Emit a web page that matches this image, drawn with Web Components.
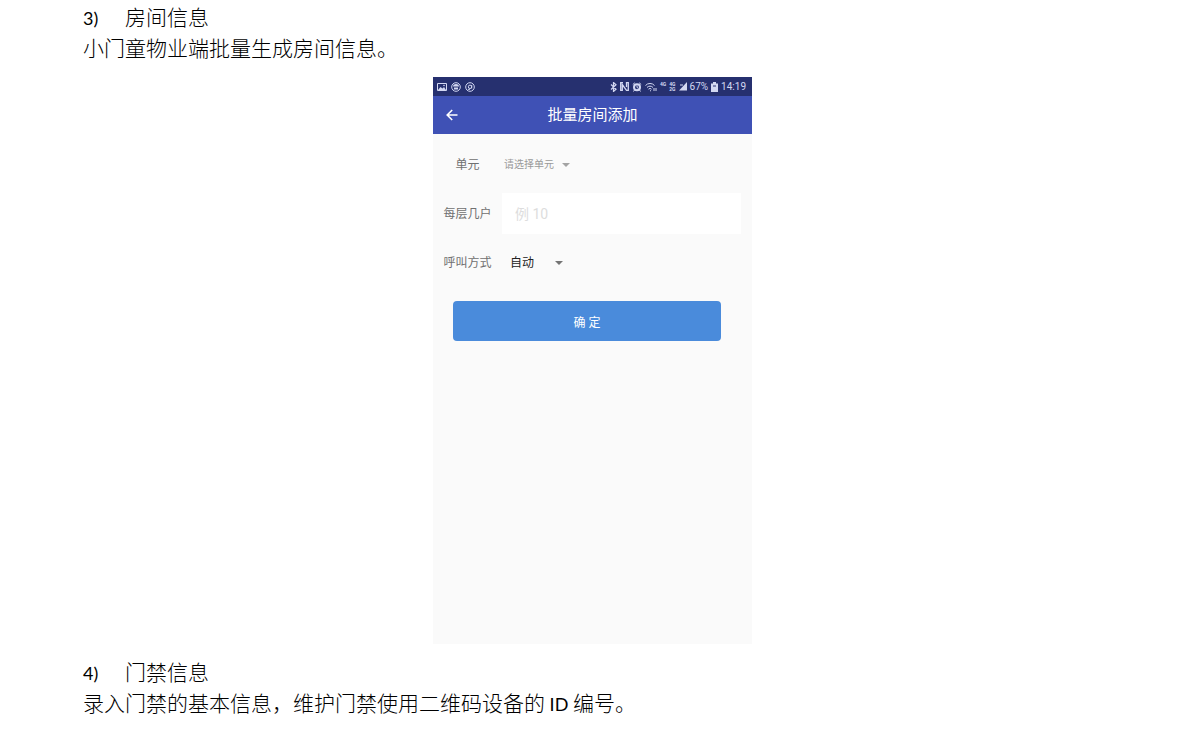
<!DOCTYPE html>
<html lang="zh-CN">
<head>
<meta charset="utf-8">
<title>房间信息</title>
<style>
  body {
    margin: 0;
    background: #ffffff;
    color: #000000;
    font-family: "Lato", "Noto Sans CJK SC", sans-serif;
  }
</style>
</head>
<body>
<manual-page>
  <manual-step number="3)" heading="房间信息">小门童物业端批量生成房间信息。</manual-step>
  <phone-screen heading="批量房间添加">
    <room-form></room-form>
  </phone-screen>
  <manual-step number="4)" heading="门禁信息">录入门禁的基本信息，维护门禁使用二维码设备的<span class="latin"> ID </span>编号。</manual-step>
</manual-page>

<script>
(function registerManual() {
  function define(name, html, setup) {
    const template = document.createElement("template");
    template.innerHTML = html;

    customElements.define(name, class extends HTMLElement {
      constructor() {
        super();
        this.attachShadow({ mode: "open" }).append(template.content.cloneNode(true));
      }

      connectedCallback() {
        if (setup) setup(this, this.shadowRoot);
      }
    });
  }

  define("manual-page", `
    <style>
      :host {
        display: flex;
        flex-direction: column;
        gap: 12px;
        padding: 1px 81px 12px 83px;
      }
    </style>
    <slot></slot>
  `);

  define("manual-step", `
    <style>
      :host {
        display: block;
        font-size: 21px;
        font-weight: 300;
        line-height: 31px;
      }

      h2 {
        display: flex;
        align-items: baseline;
        height: 31px;
        margin: 0;
        font: inherit;
      }

      #number {
        width: 42px;
      }

      #number,
      ::slotted(.latin) {
        font-size: 18px;
        font-weight: 400;
      }

      p {
        margin: 0;
      }
    </style>
    <h2><span id="number"></span><span id="heading"></span></h2>
    <p><slot></slot></p>
  `, (host, root) => {
    root.getElementById("number").textContent = host.getAttribute("number");
    root.getElementById("heading").textContent = host.getAttribute("heading");
  });

  define("status-bar", `
    <style>
      :host {
        display: flex;
        align-items: center;
        justify-content: space-between;
        height: 19px;
        padding: 0 6px 0 4px;
        background: #26306f;
        color: #d3d8f2;
        font: 10px/19px "Roboto", sans-serif;
      }

      div {
        display: flex;
        align-items: center;
        gap: 3px;
      }

      .left {
        gap: 4px;
      }

      .tiny {
        font-size: 5px;
        font-weight: 700;
        line-height: 5px;
      }

      .raised {
        padding-bottom: 5px;
      }

      svg {
        display: block;
        fill: none;
        stroke: currentColor;
      }
    </style>
    <div class="left">
      <svg width="10" height="10" viewBox="0 0 10 10"><path d="M.5 1.500h9v7h-9z"/><path d="M1 8l2.500-3 2 1.500L7 5l2 3z" fill="currentColor" stroke="none"/><circle cx="7" cy="3.500" r=".8" fill="currentColor" stroke="none"/></svg>
      <svg width="10" height="10" viewBox="0 0 10 10"><circle cx="5" cy="5" r="4.300"/><path d="M2 4.500a3 2.500 0 0 1 6 0zM3 5.500h4v2H3z" fill="currentColor" stroke="none"/></svg>
      <svg width="10" height="10" viewBox="0 0 10 10"><circle cx="5" cy="5" r="4.300"/><circle cx="5" cy="4.800" r="1.700"/><path d="M6.700 3v3.500M3 7.300h2"/></svg>
    </div>
    <div>
      <svg width="7" height="10" viewBox="0 0 7 10"><path d="M1 2.500l5 4.700L3.500 9.500v-9L6 2.800 1 7.500" stroke-width="1.200"/></svg>
      <svg width="9" height="9" viewBox="0 0 9 9"><path d="M3 .7H.7v7.600h1.600V2.500L6.500 8.300h1.800V.7H6.500V5" stroke-width="1.300"/></svg>
      <svg width="10" height="10" viewBox="0 0 10 10"><circle cx="5" cy="5.200" r="3" stroke-width="2"/><path d="M.8 2.500l2-1.700M9.200 2.500l-2-1.700M2.500 8l-1 1.500M7.500 8l1 1.500M5 3.500v2l1.500.8"/></svg>
      <svg width="12" height="10" viewBox="0 0 12 10"><path d="M.5 3.500a6 6 0 0 1 9 0M2 5.500a4 4 0 0 1 6 0M3.500 7.200a2 2 0 0 1 3 0M5 8.500l1 .5M9 6v3M11 9V6"/></svg>
      <span class="tiny raised">4G</span>
      <span class="tiny">4G<br>2G</span>
      <svg width="8" height="9" viewBox="0 0 8 9"><path d="M0 8.500L8 0v8.500z" fill="currentColor" stroke="none"/><path d="M1 3h3"/></svg>
      <span>67%</span>
      <svg width="7" height="10" viewBox="0 0 7 10"><path d="M0 1.500h2V0h3v1.500h2V10H0z" fill="currentColor" stroke="none"/><path d="M2 4h3" stroke="#26306f"/></svg>
      <span>14:19</span>
    </div>
  `);

  define("app-bar", `
    <style>
      :host {
        display: grid;
        grid-template-columns: 38px 1fr 38px;
        align-items: center;
        height: 38px;
        background: #3f51b5;
        color: #ffffff;
      }

      button {
        display: grid;
        place-items: center;
        height: 38px;
        padding: 0;
        border: 0;
        background: none;
        color: inherit;
      }

      h1 {
        margin: 0;
        font-size: 15px;
        font-weight: 400;
        line-height: 22px;
        text-align: center;
      }
    </style>
    <button type="button" aria-label="返回">
      <svg width="12" height="12" viewBox="0 0 12 12" fill="none" stroke="currentColor" stroke-width="1.600"><path d="M11.500 6H1.500M6.200 1L1.200 6l5 5"/></svg>
    </button>
    <h1><slot></slot></h1>
  `);

  define("phone-screen", `
    <style>
      :host {
        display: block;
        align-self: center;
        width: 100%;
        max-width: 319px;
        margin-top: 2px;
        aspect-ratio: 319 / 567;
        background: #fafafa;
        font-family: "Roboto", "Noto Sans CJK SC", sans-serif;
      }
    </style>
    <status-bar></status-bar>
    <app-bar></app-bar>
    <slot></slot>
  `, (host, root) => {
    root.querySelector("app-bar").textContent = host.getAttribute("heading");
  });

  define("room-form", `
    <style>
      :host {
        display: block;
        padding-top: 10px;
      }

      .fields {
        display: grid;
        grid-template-columns: 69px 1fr;
        grid-auto-rows: 41px;
        row-gap: 8px;
        align-items: center;
        padding-right: 11px;
      }

      label {
        color: #707070;
        font-size: 12px;
        line-height: 20px;
        text-align: center;
      }

      .picker {
        display: flex;
        align-items: center;
        gap: 8px;
        padding-left: 2px;
        color: #999999;
      }

      .picker.chosen {
        gap: 20px;
        padding-left: 8px;
        color: #222222;
      }

      select {
        appearance: none;
        padding: 0;
        border: 0;
        background: none;
        color: inherit;
        font: inherit;
        font-size: 10px;
        line-height: 18px;
      }

      .chosen select {
        font-size: 12px;
      }

      .picker svg {
        fill: #a3a3a3;
      }

      .chosen svg {
        fill: #747474;
      }

      input {
        box-sizing: border-box;
        width: 100%;
        height: 41px;
        padding: 0 13px;
        border: 0;
        background: #ffffff;
        color: #222222;
        font: inherit;
        font-size: 14px;
      }

      input::placeholder {
        color: #dddddd;
      }

      .submit {
        display: block;
        width: calc(100% - 51px);
        height: 40px;
        margin: 18px 31px 0 20px;
        padding: 0;
        border: 0;
        border-radius: 4px;
        background: #4a8bdb;
        color: #ffffff;
        font: inherit;
        font-size: 12px;
      }
    </style>
    <form>
      <div class="fields">
        <label for="unit">单元</label>
        <div class="picker">
          <select id="unit"><option>请选择单元</option></select>
          <svg width="8" height="4" viewBox="0 0 8 4"><path d="M0 0h8L4 4z"/></svg>
        </div>
        <label for="rooms">每层几户</label>
        <input id="rooms" type="text" placeholder="例 10">
        <label for="call">呼叫方式</label>
        <div class="picker chosen">
          <select id="call"><option>自动</option></select>
          <svg width="8" height="4" viewBox="0 0 8 4"><path d="M0 0h8L4 4z"/></svg>
        </div>
      </div>
      <button class="submit" type="button">确 定</button>
    </form>
  `);
})();
</script>
</body>
</html>
